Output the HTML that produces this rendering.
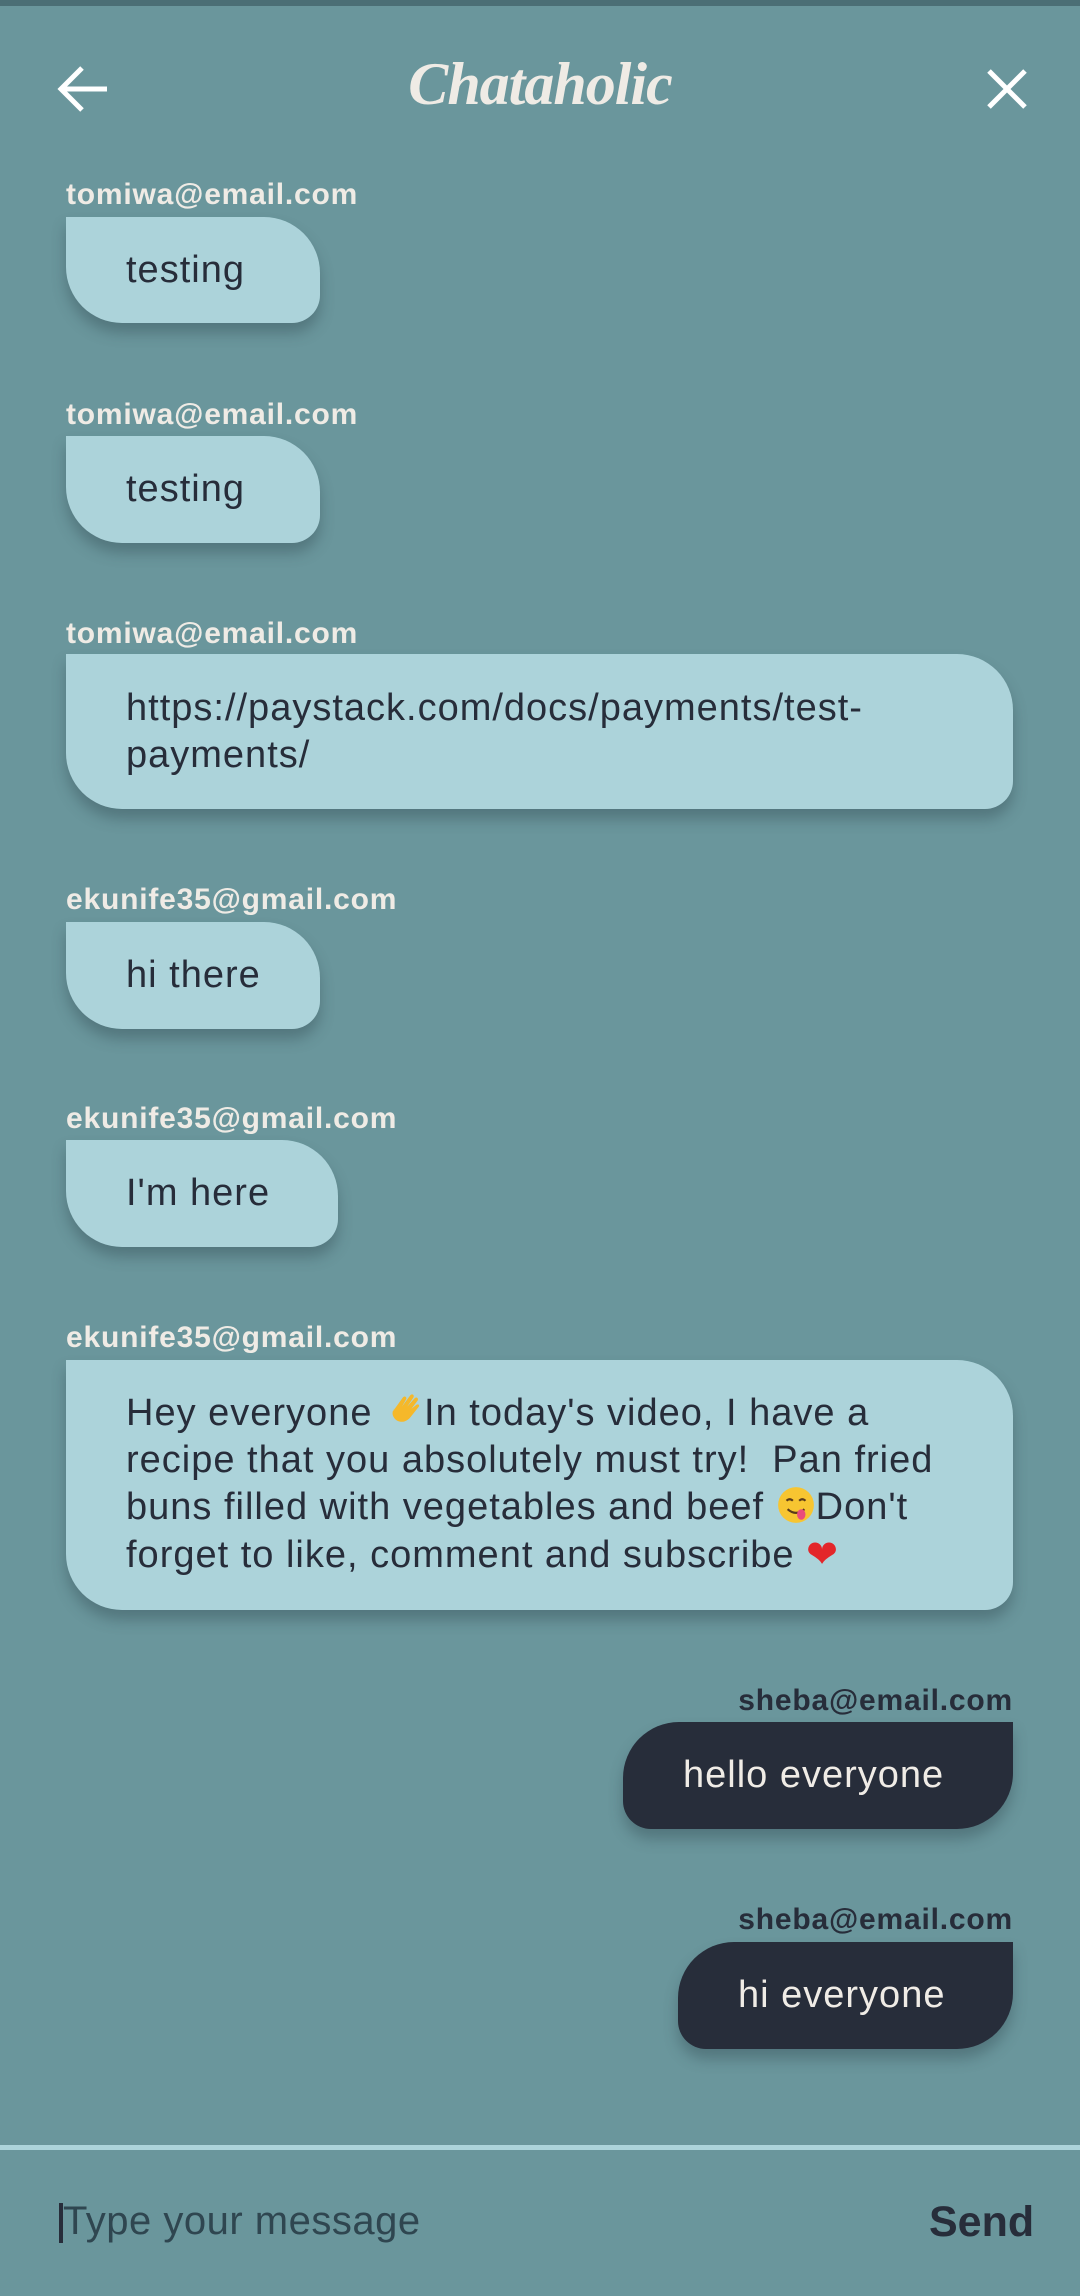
<!DOCTYPE html>
<html><head><meta charset="utf-8">
<style>
html,body{margin:0;padding:0}
body{width:1080px;height:2296px;background:#6a969c;position:relative;overflow:hidden;font-family:"Liberation Sans",sans-serif}
.top{position:absolute;left:0;top:0;width:1080px;height:6px;background:#4b6e75}
.title{position:absolute;left:0;width:1080px;top:50px;text-align:center;font-family:"Liberation Serif",serif;font-style:italic;font-weight:bold;font-size:60px;color:#efebe5;letter-spacing:-1px}
.lbl{position:absolute;font-size:30px;font-weight:bold;color:#efebe5;line-height:34px;letter-spacing:0.8px}
.lbl.r{color:#272d3a;text-align:right}
.b{position:absolute;background:#acd3da;color:#272d3a;font-size:38px;letter-spacing:1px;line-height:47px;border-radius:0 56px 28px 56px;box-shadow:0 10px 14px rgba(40,60,70,0.35);box-sizing:border-box;padding-left:60px;white-space:nowrap}
.s{background:#272d3a;color:#f0ece6;border-radius:56px 0 56px 28px}
.e{display:inline-block;width:40px;height:40px;vertical-align:-6px}
</style></head><body>
<div class="top"></div>
<svg style="position:absolute;left:55px;top:62px" width="60" height="56" viewBox="0 0 60 56"><path d="M52 27H9M27 6L6 27l21 21" stroke="#fff" stroke-width="5" fill="none"/></svg>
<svg style="position:absolute;left:984px;top:66px" width="46" height="46" viewBox="0 0 46 46"><path d="M5 5L41 41M41 5L5 41" stroke="#fff" stroke-width="5" fill="none"/></svg>
<div class="title">Chataholic</div>

<div class="lbl" style="left:66px;top:178px">tomiwa@email.com</div>
<div class="b" style="left:66px;top:217px;width:254px;height:106px;line-height:106px">testing</div>

<div class="lbl" style="left:66px;top:398px">tomiwa@email.com</div>
<div class="b" style="left:66px;top:436px;width:254px;height:107px;line-height:107px">testing</div>

<div class="lbl" style="left:66px;top:617px">tomiwa@email.com</div>
<div class="b" style="left:66px;top:654px;width:947px;height:155px;padding-top:31px">https://paystack.com/docs/payments/test-<br>payments/</div>

<div class="lbl" style="left:66px;top:883px">ekunife35@gmail.com</div>
<div class="b" style="left:66px;top:922px;width:254px;height:107px;line-height:107px">hi there</div>

<div class="lbl" style="left:66px;top:1102px">ekunife35@gmail.com</div>
<div class="b" style="left:66px;top:1140px;width:272px;height:107px;line-height:107px">I'm here</div>

<div class="lbl" style="left:66px;top:1321px">ekunife35@gmail.com</div>
<div class="b" style="left:66px;top:1360px;width:947px;height:250px;padding-top:30px">Hey everyone <svg class="e" viewBox="0 0 38 38"><path d="M8 20L18 6c2-2 4 0 3 2l-4 7 8-11c2-2 4 0 3 2l-6 9 7-8c2-2 4 0 3 2l-6 8 5-4c2-1 3 1 2 2l-8 10c-5 6-12 5-15 1s-2-7 0-10z" fill="#f5b82a"/></svg>In today's video, I have a<br>recipe that you absolutely must try!&nbsp; Pan fried<br>buns filled with vegetables and beef <svg class="e" viewBox="0 0 38 38"><circle cx="19" cy="19" r="17" fill="#f7c531"/><path d="M10 15q3-3 6 0M22 15q3-3 6 0M11 23q8 7 16 0" stroke="#5a3b1a" stroke-width="2" fill="none"/><ellipse cx="24" cy="28" rx="4" ry="5" fill="#ea4d7b"/></svg>Don't<br>forget to like, comment and subscribe <span style="color:#e3262a;font-family:'DejaVu Sans',sans-serif">❤</span></div>

<div class="lbl r" style="right:67px;top:1684px">sheba@email.com</div>
<div class="b s" style="left:623px;top:1722px;width:390px;height:107px;line-height:107px">hello everyone</div>

<div class="lbl r" style="right:67px;top:1903px">sheba@email.com</div>
<div class="b s" style="left:678px;top:1942px;width:335px;height:107px;line-height:107px">hi everyone</div>

<div style="position:absolute;left:0;top:2145px;width:1080px;height:5px;background:#acd3da"></div>
<div style="position:absolute;left:59px;top:2203px;width:4px;height:40px;background:#272d3a"></div>
<div style="position:absolute;left:63px;top:2199px;font-size:40px;letter-spacing:0.5px;color:#2f4650;line-height:44px">Type your message</div>
<div style="position:absolute;left:929px;top:2198px;font-size:43px;font-weight:bold;color:#272d3a;line-height:48px">Send</div>
</body></html>
